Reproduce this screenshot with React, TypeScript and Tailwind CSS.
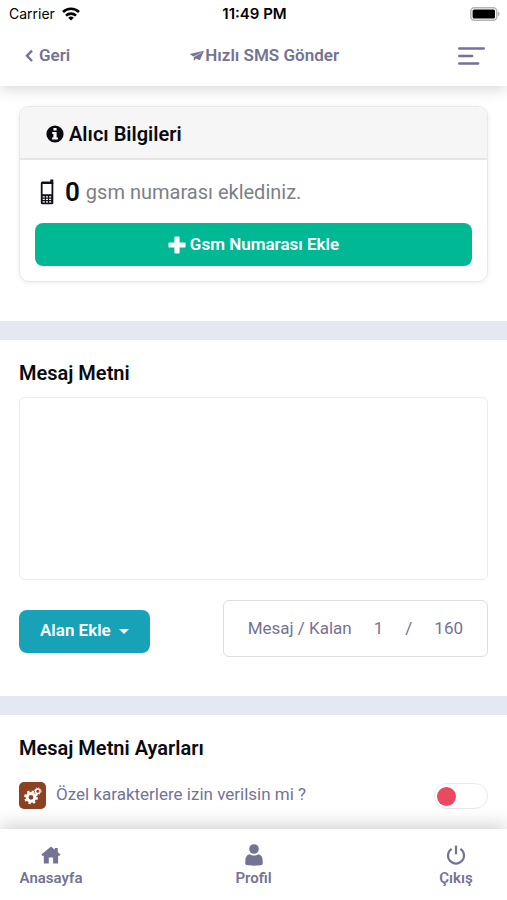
import { useState } from "react";

// Hızlı SMS ekranı: üst bar, alıcı kartı, mesaj metni, ayarlar ve alt menü.

function StatusBar() {
  return (
    <div className="grid grid-cols-3 items-center h-7 pl-[9px] pr-[7px] font-['Inter',sans-serif] text-sm text-black">
      <div className="flex items-center gap-[7px]">
        <span>Carrier</span>
        <svg viewBox="0 0 18 14" className="w-[18px] h-[14px]" fill="none" stroke="currentColor" strokeWidth="2.6">
          <path d="M1 5a11.4 11.4 0 0 1 16 0" />
          <path d="M4 8.6a7.2 7.2 0 0 1 10 0" />
          <path d="M9 13.6 6.2 10.8a4 4 0 0 1 5.6 0z" fill="currentColor" stroke="none" />
        </svg>
      </div>
      <span className="text-center text-[15px] font-semibold whitespace-nowrap">11:49 PM</span>
      <svg viewBox="0 0 30 14" className="w-[30px] h-[14px] justify-self-end">
        <rect x="0.8" y="0.8" width="26" height="12.4" rx="3.6" fill="#fff" stroke="#b4b4b4" strokeWidth="1.5" />
        <rect x="2.6" y="2.5" width="22.4" height="9" rx="1.6" fill="#000" />
        <path d="M28.2 4.8c1.8.5 1.8 3.9 0 4.4z" fill="#a5a5a5" />
      </svg>
    </div>
  );
}

function ChevronIcon() {
  return (
    <svg viewBox="0 0 10 14" className="w-[10px] h-[14px]" fill="none" stroke="currentColor" strokeWidth="2.4">
      <path d="M8 1.6 3 6.8 8 12" />
    </svg>
  );
}

function PlaneIcon() {
  return (
    <svg viewBox="0 0 16 12" className="w-4 h-3" fill="currentColor">
      <path d="M15 .8.8 3.9l3.4 2.5 7.4-3.2z" />
      <path d="M15 .8 4.8 6.8v4.1l2.2-2.4 3.9 1.7z" />
      <path d="m12.4 2.7-7.6 4.2" stroke="#fff" strokeWidth=".5" />
    </svg>
  );
}

function InfoIcon() {
  return (
    <svg viewBox="0 0 18 18" className="w-[18px] h-[18px]" fill="currentColor">
      <circle cx="9" cy="9" r="8.6" />
      <path d="M7.4 3h3.2v2.5H7.4zM6.2 6.9h4.4v5.5h1.3v2H6.1v-2h1.3V8.9H6.2z" fill="#fff" />
    </svg>
  );
}

function PlusIcon() {
  return (
    <svg viewBox="0 0 18 18" className="w-[18px] h-[18px]" fill="currentColor">
      <rect x="6.4" y="0.5" width="5.2" height="17" rx="0.9" />
      <rect x="0.5" y="6.4" width="17" height="5.2" rx="0.9" />
    </svg>
  );
}

function PhoneIcon() {
  return (
    <svg viewBox="0 0 14 26" className="w-[14px] h-[26px] text-[#10101a]" fill="none">
      <path d="M10.3.6h3v4.4h-3z" fill="currentColor" />
      <rect x="0.8" y="2.6" width="12.5" height="22.6" rx="1.5" fill="currentColor" />
      <path d="M2.6 5h8.9v10.2H2.6z" fill="#fff" />
      <path d="M2.7 17.9h9M2.7 20.4h9M2.7 22.9h9" stroke="#fff" strokeWidth="1.3" strokeDasharray="2.1 1.1" />
    </svg>
  );
}

function GearsIcon() {
  return (
    <svg viewBox="0 0 20 20" className="w-5 h-5" fill="none" stroke="#fff">
      <circle cx="8" cy="11.3" r="3.9" strokeWidth="3" />
      <circle cx="8" cy="11.3" r="5.9" strokeWidth="2" strokeDasharray="2.4 2.23" />
      <circle cx="14.8" cy="5.2" r="2.2" strokeWidth="1.3" />
      <circle cx="14.8" cy="5.2" r="3.3" strokeWidth="1" strokeDasharray="1.3 1.29" />
    </svg>
  );
}

function HomeIcon() {
  return (
    <svg viewBox="0 0 20 18" className="w-5 h-[18px]" fill="currentColor">
      <path d="M10 .5.4 8.6l.8 1.2h1.6v7.6h5v-5.8h4.3v5.8h5V9.800h1.600l.8-1.200-2.700-2.300V2.100h-3v1.700z" />
    </svg>
  );
}

function PersonIcon() {
  return (
    <svg viewBox="0 0 18 22" className="w-[18px] h-[22px]" fill="currentColor">
      <ellipse cx="9" cy="5" rx="4.8" ry="4.8" />
      <path d="M4.6 10.2c1.2.9 2.7 1.400 4.400 1.400s3.200-.5 4.400-1.400c2.900.7 4.300 3.100 4.300 6.600v3c0 1.200-2.200 1.900-8.700 1.900S.3 21 .3 19.800v-3c0-3.500 1.400-5.900 4.300-6.600z" />
    </svg>
  );
}

function PowerIcon() {
  return (
    <svg viewBox="0 0 20 20" className="w-5 h-5" fill="none" stroke="currentColor" strokeWidth="2.2">
      <path d="M10 .6v8.800" />
      <path d="M5.600 3.900a8 8 0 1 0 8.800 0" />
    </svg>
  );
}

const NAV_ITEMS = [
  { label: "Anasayfa", icon: <HomeIcon /> },
  { label: "Profil", icon: <PersonIcon /> },
  { label: "Çıkış", icon: <PowerIcon /> },
];

export default function App() {
  const [message, setMessage] = useState("");
  const [allowSpecial, setAllowSpecial] = useState(false);

  return (
    <div className="min-h-screen flex flex-col bg-white font-['Roboto',sans-serif] text-[#747393]">
      <header className="sticky top-0 z-10 bg-white shadow-[0_3px_14px_rgba(0,0,0,0.16)]">
        <StatusBar />
        <div className="flex items-center justify-between h-[58px] pl-6 pr-[22px] pb-[2px]">
          <a href="#" className="flex items-center gap-[5px] text-[17px] font-semibold">
            <ChevronIcon />
            Geri
          </a>
          <h1 className="flex items-center text-[17px] font-semibold">
            <PlaneIcon />
            Hızlı SMS Gönder
          </h1>
          <button type="button" aria-label="Menü">
            <svg viewBox="0 0 27 18" className="w-[27px] h-[18px]" stroke="currentColor" strokeWidth="2.4" strokeLinecap="round">
              <path d="M1.200 1.500h24.600M1.200 9h13M1.200 16.500h19" />
            </svg>
          </button>
        </div>
      </header>

      <main className="flex-1">
        <section className="px-[19px] pt-5 pb-[39px]">
          <div className="rounded-[10px] border border-[#e9e9eb] shadow-[0_1px_5px_rgba(0,0,0,0.08)] overflow-hidden">
            <h2 className="flex items-center gap-[5px] h-[53px] px-[26px] pt-[3px] bg-[#f6f6f7] border-b-2 border-[#e6e6e8] text-xl font-semibold text-[#0b0b12]">
              <InfoIcon />
              Alıcı Bilgileri
            </h2>
            <div className="px-[15px] pt-[14px] pb-[15px]">
              <p className="flex items-center h-9 mb-[13px] pl-[5px] text-xl text-[#7c7f85]">
                <PhoneIcon />
                <b className="ml-[11px] mr-[6px] text-[26px] font-semibold text-[#0b0b12]">0</b>
                gsm numarası eklediniz.
              </p>
              <button
                type="button"
                className="flex w-full h-[43px] items-center justify-center gap-1 rounded-lg bg-[#00b894] text-[17px] font-semibold text-white"
              >
                <PlusIcon />
                Gsm Numarası Ekle
              </button>
            </div>
          </div>
        </section>

        <div className="h-[19px] bg-[#e5e8f3]" />

        <section className="px-[19px] pt-[19px] pb-[39px]">
          <label htmlFor="message" className="block text-xl font-semibold text-[#0b0b12]">
            Mesaj Metni
          </label>
          <textarea
            id="message"
            value={message}
            onChange={(e) => setMessage(e.target.value)}
            className="block w-full h-[183px] mt-[10px] p-3 rounded-md border border-[#ececee] resize-none outline-none"
          />
          <div className="flex items-center justify-between mt-5">
            <button
              type="button"
              className="flex items-center gap-2 h-[43px] mt-[5px] px-[21px] rounded-lg bg-[#17a2b8] text-[17px] font-semibold text-white"
            >
              Alan Ekle
              <svg viewBox="0 0 10 5" className="w-[10px] h-[5px]" fill="currentColor">
                <path d="M0 0h10L5 5z" />
              </svg>
            </button>
            <div className="flex items-center gap-[22px] h-[57px] px-6 rounded-md border border-[#dedee2] text-[17px]">
              <span>Mesaj / Kalan</span>
              <span>1</span>
              <span>/</span>
              <span>160</span>
            </div>
          </div>
        </section>

        <div className="h-[19px] bg-[#e5e8f3]" />

        <section className="px-[19px] pt-[19px] pb-5">
          <h2 className="text-xl font-semibold text-[#0b0b12]">Mesaj Metni Ayarları</h2>
          <div className="flex items-start mt-5">
            <span className="flex items-center justify-center w-[27px] h-[27px] rounded-[5px] bg-[#8a4220]">
              <GearsIcon />
            </span>
            <label htmlFor="special" className="flex-1 ml-[10px] text-[17px] leading-6">
              Özel karakterlere izin verilsin mi ?
            </label>
            <input
              id="special"
              type="checkbox"
              checked={allowSpecial}
              onChange={(e) => setAllowSpecial(e.target.checked)}
              className="appearance-none self-center w-[54px] h-[26px] rounded-full border border-[#e9e9ed] bg-white before:block before:w-[19px] before:h-[19px] before:mt-[3px] before:ml-[2px] before:rounded-full before:bg-[#ea4a60] checked:before:ml-[30px] checked:before:bg-[#00b894]"
            />
          </div>
        </section>
      </main>

      <footer className="sticky bottom-0 z-10 bg-white shadow-[0_-3px_18px_rgba(0,0,0,0.2)]">
        <nav className="flex justify-between h-[71px] px-5 pt-[14px]">
          {NAV_ITEMS.map((item) => (
            <a key={item.label} href="#" className="flex flex-col items-center w-[62px] text-[15px] leading-[22px] font-semibold">
              <span className="flex items-center justify-center h-6">{item.icon}</span>
              {item.label}
            </a>
          ))}
        </nav>
      </footer>
    </div>
  );
}
